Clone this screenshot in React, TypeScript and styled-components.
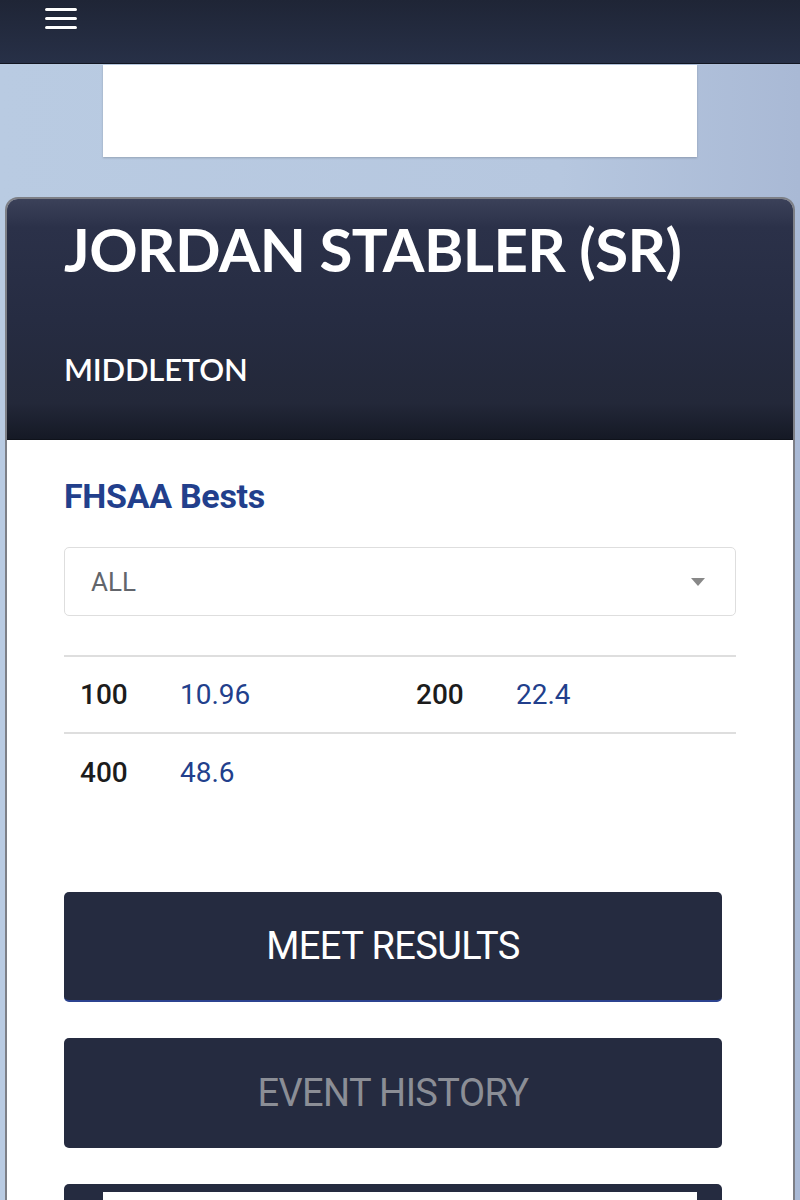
import React from "react";
import styled, { createGlobalStyle } from "styled-components";

const palette = {
  navy: "#252b40",
  sky: "#b8c9e1",
  blue: "#223f8c",
  ink: "#1c1c1c",
  line: "#dedede",
  muted: "#8b8e96",
};

const GlobalStyle = createGlobalStyle`
  html, body {
    margin: 0;
    padding: 0;
    background: ${palette.sky};
    font-family: Roboto, "Liberation Sans", sans-serif;
  }
  * { box-sizing: border-box; }
`;

const TopBar = styled.header`
  height: 64px;
  background: linear-gradient(180deg, #1f2536 0%, #273047 100%);
  border-bottom: 1px solid #121622;
  padding: 8px 0 0 45px;
`;

const MenuButton = styled.button`
  display: flex;
  flex-direction: column;
  gap: 6px;
  width: 32px;
  padding: 0;
  border: 0;
  background: none;

  span {
    display: block;
    height: 3px;
    border-radius: 2px;
    background: #fff;
    box-shadow: 0 0 1px #000;
  }
`;

const Banner = styled.div`
  background: linear-gradient(90deg, #b9cbe2 0%, #b6c7df 70%, #a9b9d5 100%);
  padding: 1px 0 40px;
  display: flex;
  justify-content: center;
`;

const AdSlot = styled.div`
  width: 594px;
  height: 92px;
  background: #fff;
  box-shadow: 0 1px 2px rgba(0, 0, 0, 0.2);
`;

const Page = styled.div`
  background: linear-gradient(90deg, #b9cbe2 0%, #b6c7df 70%, #a9b9d5 100%);
  padding: 0 5px;
`;

const Card = styled.section`
  border: 2px solid #7d7f86;
  border-bottom: 0;
  border-radius: 13px 13px 0 0;
  overflow: hidden;
  background: #fff;
`;

const CardHeader = styled.div`
  height: 241px;
  background: linear-gradient(
    180deg,
    #3b4159 0%,
    #2b3149 12%,
    #262c42 50%,
    #232839 85%,
    #151925 100%
  );
  padding: 14px 57px 0;
  color: #fff;
  font-family: Lato, "Open Sans", sans-serif;
  border-bottom: 1px solid #0f121b;
`;

const AthleteName = styled.h1`
  margin: 0;
  font-size: 60px;
  font-weight: 700;
  line-height: 1.2;
  letter-spacing: -0.6px;
`;

const SchoolName = styled.div`
  margin-top: 66px;
  font-size: 31px;
  font-weight: 600;
  line-height: 1.2;
  letter-spacing: -0.2px;
`;

const CardBody = styled.div`
  padding: 36px 57px 0;
`;

const SectionTitle = styled.h2`
  margin: 0;
  color: ${palette.blue};
  font-size: 34px;
  font-weight: 700;
  line-height: 40px;
  letter-spacing: -0.3px;
`;

const SelectBox = styled.div`
  margin-top: 31px;
  height: 69px;
  border: 1px solid ${palette.line};
  border-radius: 5px;
  display: flex;
  align-items: center;
  justify-content: space-between;
  padding: 0 30px 0 26px;
  color: #62656b;
  font-size: 26px;
`;

const Caret = styled.span`
  width: 0;
  height: 0;
  border-left: 7px solid transparent;
  border-right: 7px solid transparent;
  border-top: 8px solid #888;
`;

const BestsTable = styled.div`
  margin-top: 39px;
  border-top: 2px solid ${palette.line};
`;

const BestsRow = styled.div<{ $last?: boolean }>`
  display: grid;
  grid-template-columns: 1fr 1fr;
  height: 77px;
  align-items: center;
  border-bottom: ${(p) => (p.$last ? "0" : `2px solid ${palette.line}`)};
`;

const Mark = styled.div`
  display: flex;
  align-items: center;
  padding-left: 16px;
  font-size: 28px;
`;

const EventName = styled.span`
  width: 100px;
  color: ${palette.ink};
  font-weight: 500;
`;

const EventTime = styled.span`
  color: ${palette.blue};
`;

const Actions = styled.div`
  margin-top: 81px;
  margin-right: 14px;
  display: flex;
  flex-direction: column;
  gap: 36px;
`;

const ActionButton = styled.button<{ $dim?: boolean; $active?: boolean }>`
  height: 110px;
  width: 100%;
  border: 0;
  border-radius: 5px;
  background: ${palette.navy};
  border-bottom: ${(p) => (p.$active ? "2px solid #2c4390" : "0")};
  color: ${(p) => (p.$dim ? palette.muted : "#fff")};
  font-family: Roboto, sans-serif;
  font-size: 38px;
  letter-spacing: -0.6px;
  text-transform: uppercase;
`;

const EmbedButton = styled.div`
  height: 110px;
  border-radius: 5px 5px 0 0;
  background: ${palette.navy};
  padding: 8px 25px 0 39px;

  div {
    height: 100%;
    background: #fff;
  }
`;

type Best = { event: string; time: string };

const bests: Best[][] = [
  [
    { event: "100", time: "10.96" },
    { event: "200", time: "22.4" },
  ],
  [{ event: "400", time: "48.6" }],
];

export default function App() {
  return (
    <>
      <GlobalStyle />
      <TopBar>
        <MenuButton aria-label="menu">
          <span />
          <span />
          <span />
        </MenuButton>
      </TopBar>
      <Banner>
        <AdSlot />
      </Banner>
      <Page>
        <Card>
          <CardHeader>
            <AthleteName>JORDAN STABLER (SR)</AthleteName>
            <SchoolName>MIDDLETON</SchoolName>
          </CardHeader>
          <CardBody>
            <SectionTitle>FHSAA Bests</SectionTitle>
            <SelectBox>
              ALL
              <Caret />
            </SelectBox>
            <BestsTable>
              {bests.map((row, i) => (
                <BestsRow key={i} $last={i === bests.length - 1}>
                  {row.map((b) => (
                    <Mark key={b.event}>
                      <EventName>{b.event}</EventName>
                      <EventTime>{b.time}</EventTime>
                    </Mark>
                  ))}
                </BestsRow>
              ))}
            </BestsTable>
            <Actions>
              <ActionButton $active>Meet Results</ActionButton>
              <ActionButton $dim>Event History</ActionButton>
              <EmbedButton>
                <div />
              </EmbedButton>
            </Actions>
          </CardBody>
        </Card>
      </Page>
    </>
  );
}
